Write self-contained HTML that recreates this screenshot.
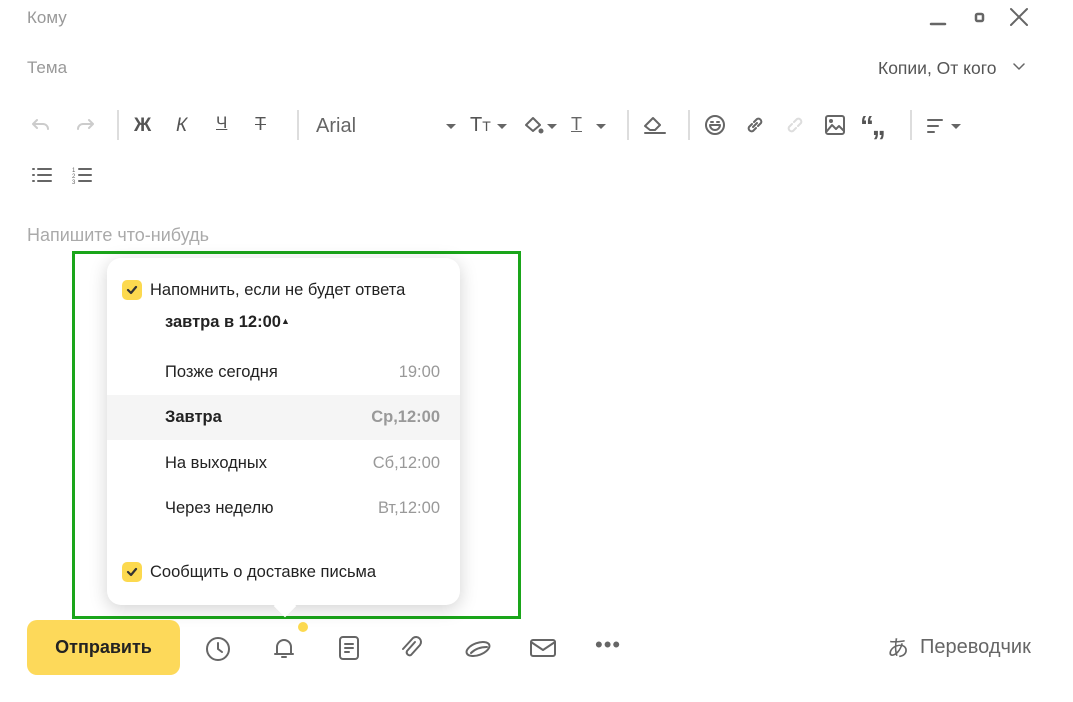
<!DOCTYPE html>
<html><head><meta charset="utf-8"><style>
body{margin:0;width:1073px;height:702px;background:#fff;font-family:"Liberation Sans",sans-serif;position:relative;overflow:hidden;color:#222}
.a{position:absolute}
.g{color:#999;font-size:17px}
svg{position:absolute;fill:none;stroke:#666;stroke-width:2;stroke-linecap:round;stroke-linejoin:round}
.sep{position:absolute;top:110px;width:2px;height:30px;background:#ddd}
.row{position:absolute;left:107px;width:353px;height:45px;font-size:16.5px}
.row span{position:absolute;left:58px;top:13px}
.row b{position:absolute;right:20px;top:13px;font-weight:normal;color:#999}
.cb{position:absolute;width:20px;height:20px;background:#fcd94f;border-radius:5px}
.car{position:absolute;width:0;height:0;border-left:5px solid transparent;border-right:5px solid transparent;border-top:5px solid #666}
</style></head><body>
<div class="a g" style="left:27px;top:8px">Кому</div>
<div class="a g" style="left:27px;top:58px">Тема</div>
<div class="a" style="left:878px;top:58px;font-size:17.5px;color:#555">Копии, От кого</div>
<svg style="left:1012px;top:62px" width="14" height="10"><path d="M2 2l5 5 5-5" stroke-width="1.5"/></svg>
<svg style="left:928px;top:8px" width="20" height="20"><path d="M3 16h14" stroke-width="2.5"/></svg>
<svg style="left:970px;top:8px" width="20" height="20"><rect x="6" y="6" width="7" height="7" rx="1.5" stroke-width="2.5"/></svg>
<svg style="left:1008px;top:6px" width="22" height="22"><path d="M3 3l16 16M19 3L3 19"/></svg>
<!-- toolbar -->
<svg style="left:30px;top:114px" width="24" height="24" ><path d="M7 6L3 10l4 4M3 10h10a5 5 0 015 5" stroke="#ccc"/></svg>
<svg style="left:72px;top:114px" width="24" height="24"><path d="M17 6l4 4-4 4M21 10H11a5 5 0 00-5 5" stroke="#ccc"/></svg>
<div class="sep" style="left:117px"></div>
<div class="a" style="left:134px;top:115px;font-size:19px;font-weight:bold;color:#555">Ж</div>
<div class="a" style="left:176px;top:115px;font-size:19px;font-style:italic;color:#555">К</div>
<div class="a" style="left:216px;top:113px;font-size:17px;color:#555;text-decoration:underline">Ч</div>
<div class="a" style="left:255px;top:114px;font-size:18px;color:#555;text-decoration:line-through">Т</div>
<div class="sep" style="left:297px"></div>
<div class="a" style="left:316px;top:115px;font-size:20px;color:#666">Arial</div>
<div class="car" style="left:446px;top:124px"></div>
<div class="a" style="left:470px;top:114px;font-size:20px;color:#555">T<span style="font-size:14px">T</span></div>
<div class="car" style="left:497px;top:124px"></div>
<svg style="left:522px;top:114px" width="24" height="24"><path d="M4 11l7-7 7 7-7 6z"/><circle cx="19" cy="17" r="1.5" fill="#666"/></svg>
<div class="car" style="left:547px;top:124px"></div>
<div class="a" style="left:571px;top:114px;font-size:18px;color:#666;text-decoration:underline">T</div>
<div class="car" style="left:596px;top:124px"></div>
<div class="sep" style="left:627px"></div>
<svg style="left:641px;top:112px" width="26" height="26"><path d="M4 14l8-8 7 7-5 5H9zM4 21h20"/></svg>
<div class="sep" style="left:688px"></div>
<svg style="left:703px;top:113px" width="24" height="24"><circle cx="12" cy="12" r="9"/><path d="M7 12h10a5 5 0 01-10 0M8 9h2M14 9h2"/></svg>
<svg style="left:743px;top:113px" width="24" height="24"><path d="M10 14l4-4M9 11l-3 3a3 3 0 004 4l3-3M15 13l3-3a3 3 0 00-4-4l-3 3"/></svg>
<svg style="left:783px;top:113px" width="24" height="24"><path d="M9 11l-3 3a3 3 0 004 4l3-3M15 13l3-3a3 3 0 00-4-4l-3 3" stroke="#ddd"/></svg>
<svg style="left:823px;top:113px" width="24" height="24"><rect x="3" y="3" width="18" height="18" rx="2"/><path d="M4 18l5-6 4 4 3-3 5 5"/><circle cx="8" cy="8" r="1"/></svg>
<div class="a" style="left:860px;top:110px;font-size:28px;font-weight:bold;color:#555;letter-spacing:-2px">“,,</div>
<div class="sep" style="left:910px"></div>
<svg style="left:925px;top:114px" width="24" height="24"><path d="M3 6h14M3 12h10M3 18h6"/></svg>
<div class="car" style="left:951px;top:124px"></div>
<svg style="left:30px;top:163px" width="24" height="24"><path d="M8 6h13M8 12h13M8 18h13M3 6h1M3 12h1M3 18h1"/></svg>
<svg style="left:70px;top:163px" width="24" height="24"><path d="M9 6h12M9 12h12M9 18h12"/><text x="2" y="9" font-size="6" fill="#666" stroke="none">1</text><text x="2" y="15" font-size="6" fill="#666" stroke="none">2</text><text x="2" y="21" font-size="6" fill="#666" stroke="none">3</text></svg>
<div class="a" style="left:27px;top:225px;font-size:18px;color:#aaa">Напишите что-нибудь</div>
<!-- green frame -->
<div class="a" style="left:72px;top:251px;width:443px;height:362px;border:3px solid #1aa51a"></div>
<!-- popup -->
<div class="a" style="left:107px;top:258px;width:353px;height:347px;background:#fff;border-radius:14px;box-shadow:0 4px 18px rgba(0,0,0,.18)"></div>
<div class="a" style="left:277px;top:598px;width:16px;height:16px;background:#fff;transform:rotate(45deg)"></div>
<div class="cb" style="left:122px;top:280px"></div>
<svg style="left:124px;top:282px" width="16" height="16"><path d="M4 8l3 3 5-6" stroke="#333" stroke-width="2.2"/></svg>
<div class="a" style="left:150px;top:281px;font-size:16.5px">Напомнить, если не будет ответа</div>
<div class="a" style="left:165px;top:313px;font-size:16.5px;font-weight:bold">завтра в 12:00<span style="font-size:9px;vertical-align:3px">▲</span></div>
<div class="row" style="top:350px"><span>Позже сегодня</span><b>19:00</b></div>
<div class="row" style="top:395px;background:#f5f5f5"><span style="font-weight:bold">Завтра</span><b style="font-weight:bold">Ср,12:00</b></div>
<div class="row" style="top:441px"><span>На выходных</span><b>Сб,12:00</b></div>
<div class="row" style="top:486px"><span>Через неделю</span><b>Вт,12:00</b></div>
<div class="cb" style="left:122px;top:562px"></div>
<svg style="left:124px;top:564px" width="16" height="16"><path d="M4 8l3 3 5-6" stroke="#333" stroke-width="2.2"/></svg>
<div class="a" style="left:150px;top:563px;font-size:16.5px">Сообщить о доставке письма</div>
<!-- bottom -->
<div class="a" style="left:27px;top:620px;width:153px;height:55px;background:#fdd95a;border-radius:10px;font-size:18px;font-weight:bold;text-align:center;line-height:55px">Отправить</div>
<div class="a" style="left:298px;top:622px;width:10px;height:10px;border-radius:50%;background:#fcd94f"></div>
<svg style="left:204px;top:635px" width="28" height="28"><circle cx="14" cy="14" r="11"/><path d="M14 8v6l4 3"/></svg>
<svg style="left:270px;top:634px" width="28" height="28"><path d="M7 20V13a7 7 0 0114 0v7h2H5z M12 23h4"/></svg>
<svg style="left:335px;top:634px" width="28" height="28"><rect x="5" y="3" width="18" height="22" rx="3"/><path d="M10 10h8M10 14h8M10 18h4"/></svg>
<svg style="left:398px;top:634px" width="28" height="28"><path d="M17 8l-8 9a3 3 0 004 4l9-10a5 5 0 00-7-7L5 15"/></svg>
<svg style="left:463px;top:634px" width="30" height="28"><ellipse cx="15" cy="15" rx="12" ry="6" transform="rotate(-20 15 15)"/><path d="M8 19c4-4 10-6 16-6"/></svg>
<svg style="left:528px;top:634px" width="30" height="28"><rect x="3" y="6" width="24" height="16" rx="2"/><path d="M3 8l12 8 12-8"/></svg>
<div class="a" style="left:595px;top:632px;font-size:22px;color:#666;letter-spacing:1px">•••</div>
<div class="a" style="left:887px;top:633px;font-size:22px;color:#666;font-family:'Noto Sans CJK JP',sans-serif;line-height:28px">あ</div>
<div class="a" style="left:920px;top:636px;font-size:20px;color:#666">Переводчик</div>
</body></html>
